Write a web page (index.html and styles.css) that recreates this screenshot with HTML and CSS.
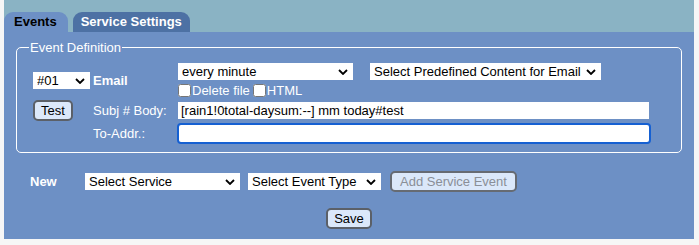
FILE: index.html
```html
<!DOCTYPE html>
<html lang="en">
  <head>
    <meta charset="UTF-8" />
    <meta name="viewport" content="width=device-width, initial-scale=1.0" />
    <title>Events</title>
    <link rel="stylesheet" href="styles.css">
  </head>
  <body>
    <div class="wrap">
      <div class="tabbar">
        <div class="tab active">Events</div>
        <div class="tab">Service Settings</div>
      </div>

      <div class="panel">
        <fieldset class="eventDef">
          <legend>Event Definition</legend>

          <div class="defGrid">
            <select class="sel selNum">
              <option>#01</option>
            </select>
            <span class="lbl bold">Email</span>
            <div class="stack">
              <div class="line">
                <select class="sel selFreq">
                  <option>every minute</option>
                </select>
                <select class="sel selContent">
                  <option>Select Predefined Content for Email</option>
                </select>
              </div>
              <div class="checks">
                <label><input type="checkbox" />Delete file</label>
                <label><input type="checkbox" />HTML</label>
              </div>
            </div>

            <button class="btn">Test</button>
            <span class="lbl">Subj # Body:</span>
            <input type="text" class="txt" value="[rain1!0total-daysum:--] mm today#test" />

            <span></span>
            <span class="lbl">To-Addr.:</span>
            <input type="text" class="txt focused" value="" />
          </div>
        </fieldset>

        <div class="newRow">
          <span class="lbl bold newLbl">New</span>
          <select class="sel selService">
            <option>Select Service</option>
          </select>
          <select class="sel selType">
            <option>Select Event Type</option>
          </select>
          <button class="btn" disabled>Add Service Event</button>
        </div>

        <div class="saveRow">
          <button class="btn">Save</button>
        </div>
      </div>
    </div>
  </body>
</html>
```

FILE: styles.css
```css
body {
  margin: 0;
  background: #f6f6f6;
  font-family: "Liberation Sans", Arial, sans-serif;
  font-size: 13px;
}

.wrap {
  margin: 0 5px 0 4px;
}

.tabbar {
  background: #8ab3c4;
  height: 32px;
  display: flex;
  align-items: flex-end;
  gap: 5px;
}

.tab {
  height: 20px;
  line-height: 20px;
  padding: 0 8px;
  border-radius: 9px 9px 0 0;
  background: #4d71a4;
  color: #fff;
  font-weight: bold;
  font-size: 13px;
}

.tab.active {
  background: #6d90c5;
  color: #000;
  padding: 0 11px 0 10px;
}

.panel {
  background: #6d90c5;
  padding: 8px 12px 11px;
  height: 207px;
  box-sizing: border-box;
}

.eventDef {
  margin: 0;
  border: 1px solid #fff;
  border-radius: 5px;
  padding: 7px 16px 8px;
}

.eventDef legend {
  color: #fff;
  padding: 0 1px;
  margin-left: -4px;
  font-size: 13px;
}

.defGrid {
  display: grid;
  grid-template-columns: 60px 85px 1fr;
  row-gap: 2px;
  align-items: center;
  padding-top: 1px;
}

.lbl {
  color: #fff;
  font-size: 13px;
}

.bold {
  font-weight: bold;
}

.stack {
  display: flex;
  flex-direction: column;
}

.line {
  display: flex;
  gap: 17px;
}

.checks {
  color: #fff;
  font-size: 13px;
  height: 16px;
  margin-top: 2px;
  display: flex;
  align-items: center;
}

.checks label {
  display: flex;
  align-items: center;
  margin-right: 3px;
}

.checks input {
  margin: 0 1px 0 0;
  width: 13px;
  height: 13px;
}

.sel {
  appearance: none;
  -webkit-appearance: none;
  border: none;
  border-radius: 0;
  background: #fff url("data:image/svg+xml,%3Csvg xmlns='http://www.w3.org/2000/svg' width='10' height='6'%3E%3Cpath d='M1 1l4 4 4-4' fill='none' stroke='%23000' stroke-width='1.8'/%3E%3C/svg%3E") no-repeat right 5px center;
  font-family: inherit;
  font-size: 13px;
  color: #000;
  height: 17px;
  padding: 0 18px 0 4px;
  line-height: 17px;
}

.selNum {
  width: 57px;
}

.selFreq {
  width: 175px;
}

.selContent {
  width: 231px;
}

.selService {
  width: 155px;
}

.selType {
  width: 133px;
}

.txt {
  box-sizing: border-box;
  border: none;
  border-radius: 0;
  height: 17px;
  width: 471px;
  padding: 0 3px;
  font-family: inherit;
  font-size: 13px;
  color: #000;
  outline: none;
}

.txt.focused {
  height: 21px;
  width: 474px;
  margin-left: -1px;
  border: 2px solid #1560d2;
  border-radius: 4px;
}

.btn {
  font-family: inherit;
  font-size: 13px;
  background: #dbe8fa;
  border: 2px solid #5b6068;
  border-radius: 5px;
  padding: 0 6px;
  height: 21px;
  color: #000;
  justify-self: start;
}

.btn:disabled {
  color: #8a8f97;
  border-color: #666b73;
  padding: 0 8px;
}

.newRow {
  display: flex;
  align-items: center;
  margin-top: 18px;
  padding-left: 14px;
}

.newLbl {
  width: 55px;
}

.newRow .sel {
  margin-right: 8px;
}

.newRow .btn {
  margin-left: 1px;
}

.saveRow {
  text-align: center;
  margin-top: 16px;
}
```
